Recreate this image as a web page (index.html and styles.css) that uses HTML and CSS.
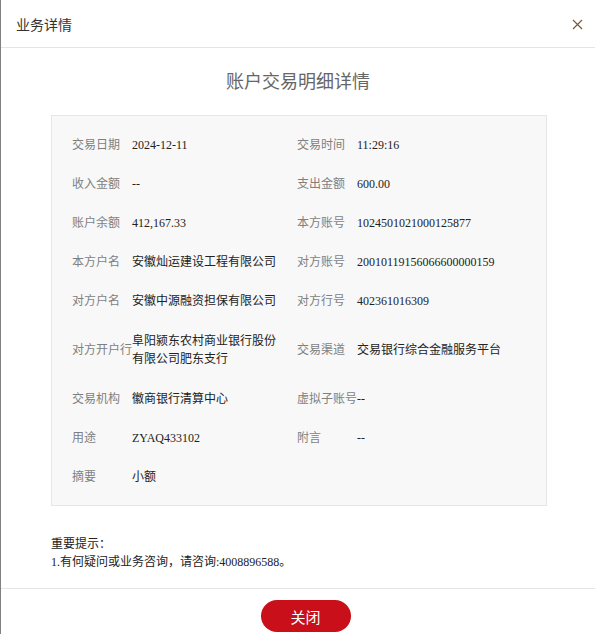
FILE: index.html
```html
<!DOCTYPE html>
<html lang="zh-CN">
  <head>
    <meta charset="utf-8" />
    <title>业务详情</title>
    <link rel="stylesheet" href="styles.css">
  </head>
  <body>
    <div class="dialog">
      <div class="dialog-header">
        <span class="dialog-title">业务详情</span>
        <span class="dialog-close">
          <svg width="11" height="11" viewBox="0 0 11 11">
            <path d="M1 1 L10 10 M10 1 L1 10" stroke="#7a5a3a" stroke-width="1.2" fill="none" />
          </svg>
        </span>
      </div>

      <div class="dialog-body">
        <h2 class="detail-title">账户交易明细详情</h2>

        <div class="detail-box">
          <div class="detail-grid">
            <div class="field"><span class="label">交易日期</span><span class="value">2024-12-11</span></div>
            <div class="field"><span class="label">交易时间</span><span class="value">11:29:16</span></div>

            <div class="field"><span class="label">收入金额</span><span class="value">--</span></div>
            <div class="field"><span class="label">支出金额</span><span class="value">600.00</span></div>

            <div class="field"><span class="label">账户余额</span><span class="value">412,167.33</span></div>
            <div class="field"><span class="label">本方账号</span><span class="value">1024501021000125877</span></div>

            <div class="field"><span class="label">本方户名</span><span class="value">安徽灿运建设工程有限公司</span></div>
            <div class="field"><span class="label">对方账号</span><span class="value">20010119156066600000159</span></div>

            <div class="field"><span class="label">对方户名</span><span class="value">安徽中源融资担保有限公司</span></div>
            <div class="field"><span class="label">对方行号</span><span class="value">402361016309</span></div>

            <div class="field"><span class="label">对方开户行</span><span class="value">阜阳颍东农村商业银行股份有限公司肥东支行</span></div>
            <div class="field"><span class="label">交易渠道</span><span class="value">交易银行综合金融服务平台</span></div>

            <div class="field"><span class="label">交易机构</span><span class="value">徽商银行清算中心</span></div>
            <div class="field"><span class="label">虚拟子账号</span><span class="value">--</span></div>

            <div class="field"><span class="label">用途</span><span class="value">ZYAQ433102</span></div>
            <div class="field"><span class="label">附言</span><span class="value">--</span></div>

            <div class="field"><span class="label">摘要</span><span class="value">小额</span></div>
          </div>
        </div>

        <div class="notice">
          <p>重要提示：</p>
          <p>1.有何疑问或业务咨询，请咨询:4008896588。</p>
        </div>
      </div>

      <div class="dialog-footer">
        <button class="btn-close">关闭</button>
      </div>
    </div>
  </body>
</html>
```

FILE: styles.css
```css
html,
body {
  margin: 0;
  height: 100%;
}

body {
  background-color: #808080;
  font-family: "Liberation Serif", "Noto Sans CJK SC", serif;
  overflow: hidden;
}

.dialog {
  margin-left: 1px;
  min-height: 100%;
  background-color: #fff;
}

.dialog-header {
  height: 47px;
  border-bottom: 1px solid #e5e5e5;
  display: flex;
  align-items: center;
  justify-content: space-between;
  padding: 0 12px 0 15px;
}

.dialog-title {
  font-family: "Noto Sans CJK SC", sans-serif;
  font-size: 14px;
  color: #333;
}

.dialog-close {
  display: flex;
  width: 11px;
  height: 11px;
  margin-top: 1px;
}

.dialog-body {
  padding: 0 50px;
}

.detail-title {
  margin: 20px 0 23px;
  font-family: "Noto Sans CJK SC", sans-serif;
  font-weight: normal;
  font-size: 18px;
  line-height: 24px;
  color: #666;
  text-align: center;
}

.detail-box {
  width: 496px;
  border: 1px solid #e6e6e6;
  background-color: #f8f8f8;
  padding: 10px 0 8px 20px;
  box-sizing: border-box;
}

.detail-grid {
  display: grid;
  grid-template-columns: 225px 1fr;
}

.field {
  display: flex;
  align-items: center;
  padding: 10px 0 11px;
  font-size: 12px;
  line-height: 18px;
}

.field:nth-child(11),
.field:nth-child(12) {
  padding: 11px 0 12px;
}

.label {
  flex: none;
  width: 60px;
  color: #7f7f7f;
  white-space: nowrap;
}

.value {
  width: 150px;
  color: #222;
}

.notice {
  margin: 29px 0 17px;
  font-size: 12px;
  line-height: 18px;
  color: #222;
}

.notice p {
  margin: 0;
}

.dialog-footer {
  border-top: 1px solid #e5e5e5;
  padding: 11px 0 0 15px;
  display: flex;
  justify-content: center;
}

.btn-close {
  width: 90px;
  height: 32px;
  border: none;
  border-radius: 16px;
  background-color: #c80f1a;
  color: #fff;
  font-family: "Noto Sans CJK SC", sans-serif;
  font-size: 15px;
  cursor: pointer;
}
```
